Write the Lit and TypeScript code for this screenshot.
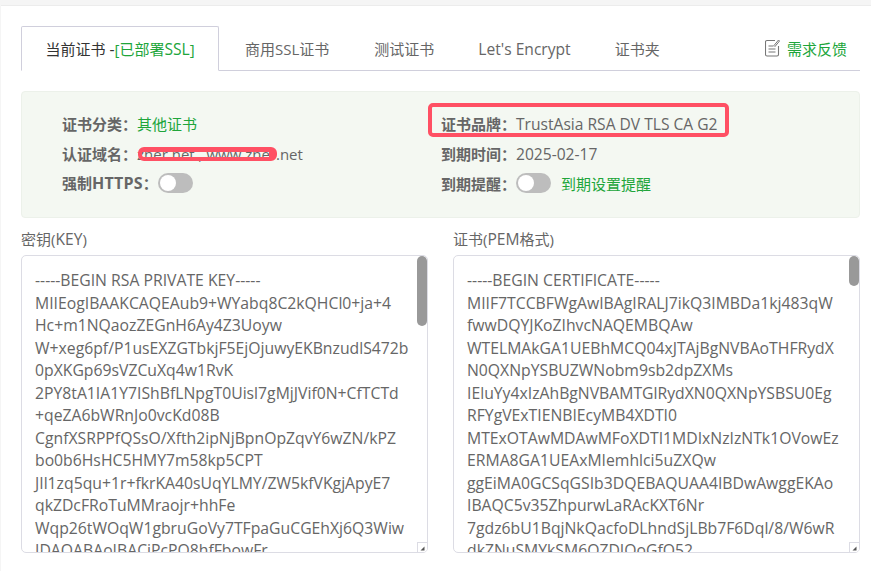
import { LitElement, html, css } from "lit";
import { customElement } from "lit/decorators.js";

const KEY = `-----BEGIN RSA PRIVATE KEY-----
MIIEogIBAAKCAQEAub9+WYabq8C2kQHCl0+ja+4
Hc+m1NQaozZEGnH6Ay4Z3Uoyw
W+xeg6pf/P1usEXZGTbkjF5EjOjuwyEKBnzudlS472b
0pXKGp69sVZCuXq4w1RvK
2PY8tA1IA1Y7IShBfLNpgT0Uisl7gMjJVif0N+CfTCTd
+qeZA6bWRnJo0vcKd08B
CgnfXSRPPfQSsO/Xfth2ipNjBpnOpZqvY6wZN/kPZ
bo0b6HsHC5HMY7m58kp5CPT
JIl1zq5qu+1r+fkrKA40sUqYLMY/ZW5kfVKgjApyE7
qkZDcFRoTuMMraojr+hhFe
Wqp26tWOqW1gbruGoVy7TFpaGuCGEhXj6Q3Wiw
IDAQABAoIBACiPcPQ8hfFbowFr`.split("\n");

const CERT = `-----BEGIN CERTIFICATE-----
MIIF7TCCBFWgAwIBAgIRALJ7ikQ3IMBDa1kj483qW
fwwDQYJKoZIhvcNAQEMBQAw
WTELMAkGA1UEBhMCQ04xJTAjBgNVBAoTHFRydX
N0QXNpYSBUZWNobm9sb2dpZXMs
IEluYy4xIzAhBgNVBAMTGlRydXN0QXNpYSBSU0Eg
RFYgVExTIENBIEcyMB4XDTI0
MTExOTAwMDAwMFoXDTI1MDIxNzIzNTk1OVowEz
ERMA8GA1UEAxMIemhlci5uZXQw
ggEiMA0GCSqGSIb3DQEBAQUAA4IBDwAwggEKAo
IBAQC5v35ZhpurwLaRAcKXT6Nr
7gdz6bU1BqjNkQacfoDLhndSjLBb7F6Dql/8/W6wR
dkZNuSMYkSM6OZDIOoGfO52`.split("\n");

@customElement("app-root")
export class AppRoot extends LitElement {
  static styles = css`
    :host {
      display: block;
      width: 871px;
      height: 571px;
      overflow: hidden;
      background: #f5f5f5;
      font-family: "Open Sans", "Noto Sans CJK SC", sans-serif;
      font-size: 15px;
      color: #666;
    }
    .en { font-size: 15.6px; }
    .en.domain { font-size: 15px; }
    .down { padding-top: 2px; }
    .page {
      position: relative;
      box-sizing: border-box;
      margin: 5px 0 0 1px;
      height: 566px;
      padding: 20px 11px 0 20px;
      background: #fff;
      border-top: 1px solid #ececec;
    }
    .tabs {
      display: flex;
      align-items: stretch;
      height: 45px;
      box-sizing: border-box;
      border-bottom: 1px solid #d0cfdc;
    }
    .tab {
      display: flex;
      align-items: center;
      padding: 0 22px;
      white-space: nowrap;
    }
    .tab.first { margin-left: 4px; margin-right: 1px; }
    .tab.active {
      box-sizing: border-box;
      width: 198px;
      height: 45px;
      justify-content: center;
      padding: 0;
      background: #fff;
      color: #333;
      border: 1px solid #d0cfdc;
      border-bottom: 1px solid #fff;
      border-radius: 2px 2px 0 0;
      white-space: pre;
    }
    .green { color: #20a53a; }
    .feedback {
      margin-left: auto;
      display: flex;
      align-items: center;
      gap: 7px;
      padding-right: 13px;
      color: #20a53a;
    }
    .panel {
      box-sizing: border-box;
      margin-top: 20px;
      height: 127px;
      padding: 16px 0 0 40px;
      display: grid;
      grid-template-columns: 379px 1fr;
      grid-auto-rows: 30px;
      background: #f4f8f2;
      border: 1px solid #ecf1ea;
      border-radius: 4px;
    }
    .row { display: flex; align-items: center; white-space: nowrap; }
    .lbl { font-weight: 600; color: #666; }
    .lbl b { font-weight: 700; font-size: 16px; letter-spacing: 0.2px; }
    .val { color: #666; }
    .switch {
      position: relative;
      display: block;
      width: 35px;
      height: 20px;
      border-radius: 10px;
      background: #bdbdbd;
    }
    .switch::after {
      content: "";
      position: absolute;
      left: 2px;
      top: 2px;
      width: 16px;
      height: 16px;
      border-radius: 50%;
      background: #fff;
    }
    .remind { margin-left: 10px; }
    .fields {
      display: grid;
      grid-template-columns: 407px 407px;
      column-gap: 25px;
      margin-top: 10px;
    }
    .field-label { line-height: 22px; height: 24px; color: #666; }
    .box {
      position: relative;
      box-sizing: border-box;
      margin-top: 3px;
      height: 298px;
      overflow: hidden;
      background: #fff;
      border: 1px solid #dcdce4;
      border-radius: 5px;
      padding: 13px 13px 0;
      line-height: 22.5px;
      font-size: 15.75px;
      color: #666;
    }
    .line { white-space: pre; }
    .thumb {
      position: absolute;
      top: 0;
      right: 0;
      width: 10px;
      border-radius: 5px;
      background: #999;
    }
    .thumb.k { height: 70px; }
    .thumb.c { height: 30px; }
    .resizer {
      position: absolute;
      right: 0;
      bottom: 0;
      width: 10px;
      height: 10px;
      box-sizing: border-box;
      background: #fff;
      border-left: 1px solid #dcdce4;
      border-top: 1px solid #dcdce4;
      display: block;
    }
    .resizer svg { display: block; }
    .redact {
      position: absolute;
      left: 137px;
      top: 141px;
      box-sizing: border-box;
      width: 139px;
      height: 14px;
      border-style: solid;
      border-color: #ff5064;
      border-width: 5px 8px 4px 4px;
      border-radius: 6px;
    }
    .mark {
      position: absolute;
      left: 427px;
      top: 97px;
      box-sizing: border-box;
      width: 301px;
      height: 34px;
      border: 4px solid #ff5064;
      border-radius: 5px;
    }
  `;

  private grip() {
    return html`<svg width="9" height="9" viewBox="0 0 9 9"><path d="M6.500 3.500v4h-4z" fill="#555" /></svg>`;
  }

  render() {
    return html`
      <div class="page">
        <div class="tabs">
          <div class="tab active"><span>当前证书<span class="en"> -</span></span><span class="green">[已部署<span class="en">SSL</span>]</span></div>
          <div class="tab first">商用SSL证书</div>
          <div class="tab">测试证书</div>
          <div class="tab"><span class="en down">Let's Encrypt</span></div>
          <div class="tab">证书夹</div>
          <div class="feedback">
            <svg width="15" height="18" viewBox="0 0 15 18" fill="none" stroke="#777" stroke-width="1.1">
              <path d="M10 1.500H2a1.500 1.500 0 0 0-1.500 1.500v12.500a1.500 1.500 0 0 0 1.500 1.500h10a1.500 1.500 0 0 0 1.500-1.500V7" />
              <path d="M3.500 7h5M3.500 10h7M3.500 13h7" />
              <path d="M9 6.500l4.500-5.500 1 1L10 7.500z" stroke-width="1" />
            </svg>
            <span>需求反馈</span>
          </div>
        </div>
        <div class="panel">
          <div class="row"><span class="lbl">证书分类：</span><span class="green">其他证书</span></div>
          <div class="row"><span class="lbl">证书品牌：</span><span class="val en down">TrustAsia RSA DV TLS CA G2</span></div>
          <div class="row"><span class="lbl">认证域名：</span><span class="val en domain down">zner.net , www.zner.net</span></div>
          <div class="row"><span class="lbl">到期时间：</span><span class="val en down">2025-02-17</span></div>
          <div class="row"><span class="lbl">强制<b>HTTPS</b>：</span><span class="switch"></span></div>
          <div class="row"><span class="lbl">到期提醒：</span><span class="switch"></span><span class="green remind">到期设置提醒</span></div>
        </div>
        <div class="fields">
          <div>
            <div class="field-label">密钥(<span class="en">KEY</span>)</div>
            <div class="box">
              ${KEY.map((l) => html`<div class="line">${l}</div>`)}
              <span class="thumb k"></span><span class="resizer">${this.grip()}</span>
            </div>
          </div>
          <div>
            <div class="field-label">证书(<span class="en">PEM</span>格式)</div>
            <div class="box">
              ${CERT.map((l) => html`<div class="line">${l}</div>`)}
              <span class="thumb c"></span><span class="resizer">${this.grip()}</span>
            </div>
          </div>
        </div>
        <div class="redact"></div>
        <div class="mark"></div>
      </div>
    `;
  }
}
